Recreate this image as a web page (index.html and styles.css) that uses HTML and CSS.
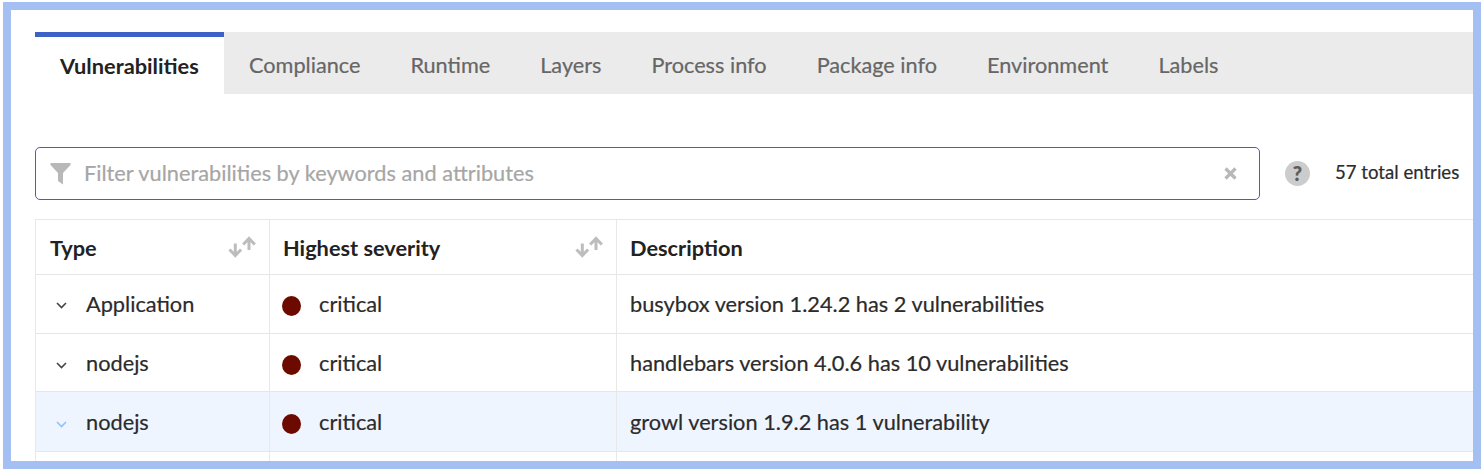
FILE: index.html
```html
<!DOCTYPE html>
<html lang="en">
<head>
<meta charset="utf-8">
<title>Vulnerabilities</title>
<link rel="stylesheet" href="styles.css">
</head>
<body>
<main class="frame">
  <nav class="tabs">
    <a class="tab active">Vulnerabilities</a>
    <a class="tab">Compliance</a>
    <a class="tab">Runtime</a>
    <a class="tab">Layers</a>
    <a class="tab">Process info</a>
    <a class="tab">Package info</a>
    <a class="tab">Environment</a>
    <a class="tab">Labels</a>
  </nav>
  <div class="toolbar">
    <div class="filter">
      <svg class="funnel" viewBox="0 0 21 22"><path d="M0.500 0h20v2L13 10v11.500L8 18v-8L0.500 2z"/></svg>
      <span class="placeholder">Filter vulnerabilities by keywords and attributes</span>
      <svg class="clear" viewBox="0 0 13 13"><path d="M1.500 1.500l10 10M11.500 1.500l-10 10"/></svg>
    </div>
    <span class="help">?</span>
    <span class="total">57 total entries</span>
  </div>
  <div class="table">
    <div class="row head">
      <div class="cell type">Type<svg class="sort" viewBox="0 0 28 22"><path d="M7.300 7.500v12M1.500 13.500l5.800 6 5.800-6M21 14V2.500M15.200 8.500l5.800-6 5.800 6"/></svg></div>
      <div class="cell severity">Highest severity<svg class="sort" viewBox="0 0 28 22"><path d="M7.300 7.500v12M1.500 13.500l5.800 6 5.800-6M21 14V2.500M15.200 8.500l5.800-6 5.800 6"/></svg></div>
      <div class="cell description">Description</div>
    </div>
    <div class="row">
      <div class="cell type"><svg class="chevron" viewBox="0 0 11 7"><path d="M1 1l4.500 4.500L10 1"/></svg>Application</div>
      <div class="cell severity"><i class="dot"></i>critical</div>
      <div class="cell description">busybox version 1.24.2 has 2 vulnerabilities</div>
    </div>
    <div class="row short">
      <div class="cell type"><svg class="chevron" viewBox="0 0 11 7"><path d="M1 1l4.500 4.500L10 1"/></svg>nodejs</div>
      <div class="cell severity"><i class="dot"></i>critical</div>
      <div class="cell description">handlebars version 4.0.6 has 10 vulnerabilities</div>
    </div>
    <div class="row selected">
      <div class="cell type"><svg class="chevron" viewBox="0 0 11 7"><path d="M1 1l4.500 4.500L10 1"/></svg>nodejs</div>
      <div class="cell severity"><i class="dot"></i>critical</div>
      <div class="cell description">growl version 1.9.2 has 1 vulnerability</div>
    </div>
    <div class="row">
      <div class="cell type"></div><div class="cell severity"></div><div class="cell description"></div>
    </div>
  </div>
</main>
</body>
</html>
```

FILE: styles.css
```css
* { box-sizing: border-box; }
body { margin: 0; background: #fff; font-family: Lato, sans-serif; font-size: 21.750px; color: #2b2b2b; -webkit-text-stroke: 0.200px; }
.frame { height: 467px; margin: 2px 3px 0; width: 1478px; border: 8px solid #a4c0f3; padding: 22px 0 0 24px; overflow: hidden; }
.tabs { display: flex; height: 62px; background: #ebebeb; }
.tab { padding: 0 25px; line-height: 67px; font-size: 21.700px; color: #666; white-space: nowrap; }
.tab.active { width: 189px; background: #fff; border-top: 5px solid #3d61c4; color: #222; font-size: 21.800px; font-weight: bold; line-height: 57px; -webkit-text-stroke: 0; }
.toolbar { display: flex; align-items: center; height: 53px; margin-top: 53px; }
.filter { display: flex; align-items: center; width: 1225px; height: 53px; border: 1px solid #3d61c4; border-radius: 5px; padding: 0 22px 0 14px; }
.funnel { width: 21px; height: 22px; fill: #b8b8b8; }
.placeholder { margin-left: 13px; padding-bottom: 2px; color: #a6a6a6; flex: 1; }
.clear { width: 13px; height: 13px; stroke: #b8b8b8; stroke-width: 3.200; fill: none; }
.help { width: 25px; height: 25px; margin-left: 25px; border-radius: 50%; background: #ccc; color: #5c5c5c; font-size: 20px; font-weight: 900; line-height: 25px; text-align: center; }
.total { margin-left: 25px; padding-bottom: 3px; font-size: 18.600px; white-space: nowrap; }
.table { margin-top: 19px; border: 1px solid #e8e8e8; border-width: 1px 0 0 1px; }
.row { display: flex; height: 59px; border-bottom: 1px solid #e6e6e6; }
.short { height: 58px; }
.head { height: 55px; font-weight: bold; color: #222; -webkit-text-stroke: 0; }
.cell { display: flex; align-items: center; padding: 0 13px 1px; white-space: nowrap; }
.head .cell { padding: 1px 13px 0; }
.short .cell { padding: 1px 13px 0; }
.row .cell.type { padding-left: 14px; }
.type { width: 234px; border-right: 1px solid #e8e8e8; }
.severity { width: 347px; border-right: 1px solid #e8e8e8; }
.description { flex: 1; }
.sort { width: 28px; height: 22px; margin: 0 0 2px auto; fill: none; stroke: #bdbdbd; stroke-width: 3; }
.chevron { width: 11px; height: 7px; margin: 4px 19px 0 6px; fill: none; stroke: #444; stroke-width: 1.600; }
.dot { width: 19px; height: 20px; margin: 4px 18px 0 -1px; border-radius: 50%; background: #6d0a00; }
.selected { height: 60px; background: #eff5ff; }
.selected .cell { padding: 1px 13px 0; }
.selected .chevron { stroke: #93bffa; }
```
